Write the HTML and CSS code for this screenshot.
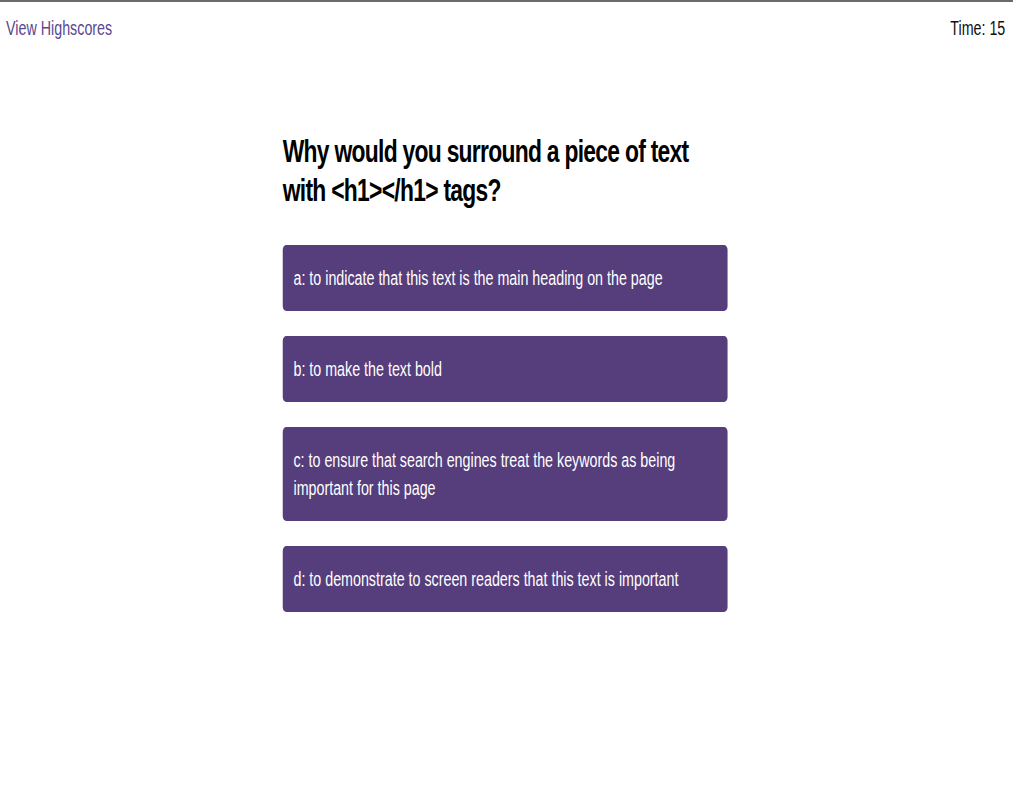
FILE: index.html
```html
<!DOCTYPE html>
<html lang="en">
<head>
<meta charset="utf-8">
<title>Code Quiz</title>
<link rel="stylesheet" href="styles.css">
</head>
<body>
<div class="page">
  <header class="topbar">
    <a class="highscores" href="#">View Highscores</a>
    <div class="timer">Time: <span>15</span></div>
  </header>
  <main class="quiz">
    <h1 class="question">Why would you surround a piece of text with &lt;h1&gt;&lt;/h1&gt; tags?</h1>
    <ul class="choices">
      <li><button class="choice">a: to indicate that this text is the main heading on the page</button></li>
      <li><button class="choice">b: to make the text bold</button></li>
      <li><button class="choice">c: to ensure that search engines treat the keywords as being important for this page</button></li>
      <li><button class="choice">d: to demonstrate to screen readers that this text is important</button></li>
    </ul>
  </main>
</div>
</body>
</html>
```
FILE: styles.css
```css
html, body {
  margin: 0;
  padding: 0;
  overflow: hidden;
  background: #ffffff;
}

body {
  border-top: 2px solid #6a6a6a;
  height: 790px;
  font-family: "Liberation Sans", Arial, Helvetica, sans-serif;
  color: #000;
}

/* the reference is a horizontally compressed capture: reproduce that squeeze */
.page {
  width: 1418px;
  transform: scaleX(0.714);
  transform-origin: 0 0;
}

.topbar {
  display: flex;
  justify-content: space-between;
  align-items: baseline;
  padding: 15px 10px 0 8.5px;
  font-size: 20px;
  line-height: 23px;
}

.highscores {
  color: #5a4890;
  text-decoration: none;
}

.timer {
  color: #111;
}

.quiz {
  width: 623px;
  margin: 92px 0 0 calc(50% - 313px);
}

.question {
  margin: 0 0 35px;
  font-size: 32px;
  line-height: 39px;
  font-weight: bold;
  letter-spacing: -1px;
}

.choices {
  list-style: none;
  margin: 0;
  padding: 0;
  display: flex;
  flex-direction: column;
  gap: 25px;
}

.choice {
  display: block;
  width: 100%;
  margin: 0;
  border: 0;
  border-radius: 5px;
  background: #563d7c;
  color: #ffffff;
  font-family: inherit;
  font-size: 20px;
  line-height: 28px;
  text-align: left;
  padding: 19px 15px;
  cursor: pointer;
}
```
